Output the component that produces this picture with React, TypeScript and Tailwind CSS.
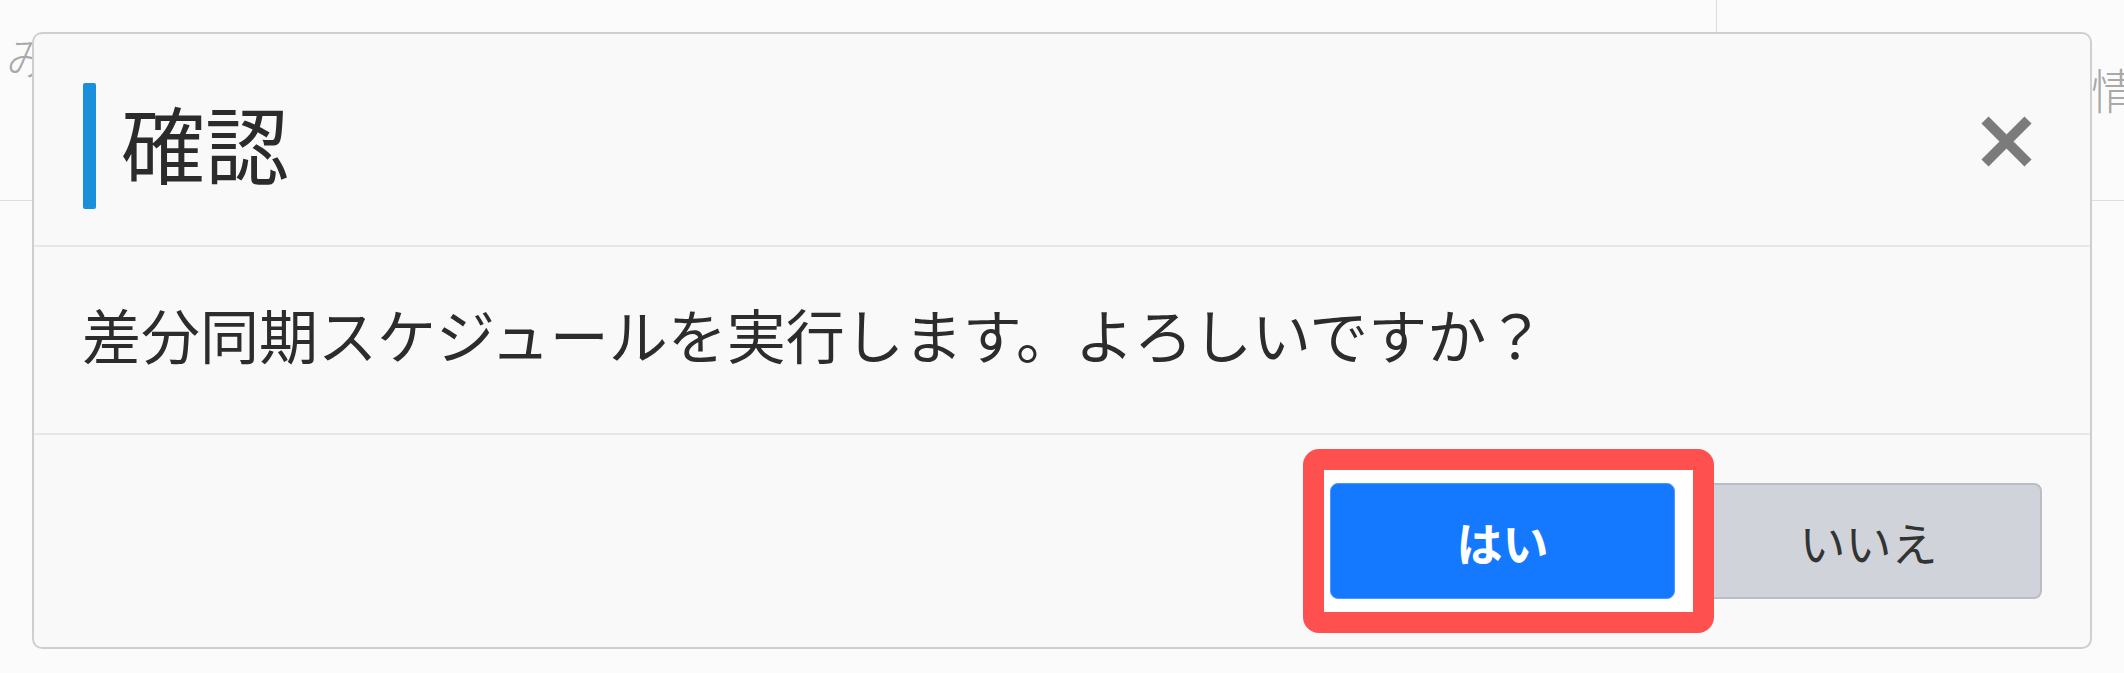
import React from 'react';

const font = { fontFamily: '"Noto Sans CJK JP", "Noto Sans", sans-serif' };

const CloseIcon: React.FC = () => (
  <svg width="53" height="53" viewBox="0 0 53 53" fill="none">
    <path d="M5 5L48 48M48 5L5 48" stroke="#7b7b7b" strokeWidth="10" />
  </svg>
);

const App: React.FC = () => {
  return (
    <div style={font} className="relative h-[673px] w-full overflow-hidden bg-[#fbfbfb]">
      {/* page behind the dialog */}
      <div className="flex h-[201px] border-b border-[#dedede] whitespace-nowrap text-[#a8a8a8]">
        <div className="w-[1717px] shrink-0 border-r border-[#dedede] pl-[6px] pt-[34px] text-[44px] leading-none font-light">
          みなし同期
        </div>
        <div className="min-w-0 flex-1 overflow-hidden pl-[374px] pt-[64px] text-[48px] leading-none font-light">情報</div>
      </div>

      {/* dialog */}
      <div className="absolute left-[32px] top-[32px] w-[2060px] rounded-[10px] border-2 border-[#cfcfcf] bg-[#f9f9f9]">
        <div className="flex h-[213px] items-start border-b-2 border-[#e7e7e7] pl-[49px] pr-[57px] pt-[49px]">
          <div className="h-[126px] w-[13px] rounded-[2px] bg-[#1a8fdc]" />
          <h2 className="ml-[25px] flex h-[126px] items-center pb-[8px] text-[84px] leading-none font-normal text-[#2b2b2b]">
            確認
          </h2>
          <button className="ml-auto mt-[32px]">
            <CloseIcon />
          </button>
        </div>

        <div className="flex h-[188px] items-center border-b-2 border-[#e7e7e7] pb-[13px] pl-[48px] text-[59px] leading-none text-[#2c2c2c]">
          差分同期スケジュールを実行します。よろしいですか？
        </div>

        <div className="flex h-[212px] items-center justify-end gap-[20px] pr-[48px]">
          <div className="relative">
            <div className="absolute -left-[27px] -top-[34px] z-0 h-[184px] w-[411px] rounded-[16px] border-[21px] border-[#ff5050] bg-white" />
            <button className="relative z-10 flex h-[116px] w-[345px] items-center justify-center rounded-[8px] border border-[#4a97ff] bg-[#1479fe] text-[46px] leading-none font-semibold text-white">
              はい
            </button>
          </div>
          <button className="flex h-[116px] w-[347px] items-center justify-center rounded-[8px] border-2 border-[#babec4] bg-[#d0d4da] text-[46px] leading-none text-[#333]">
            いいえ
          </button>
        </div>
      </div>
    </div>
  );
};

export default App;
